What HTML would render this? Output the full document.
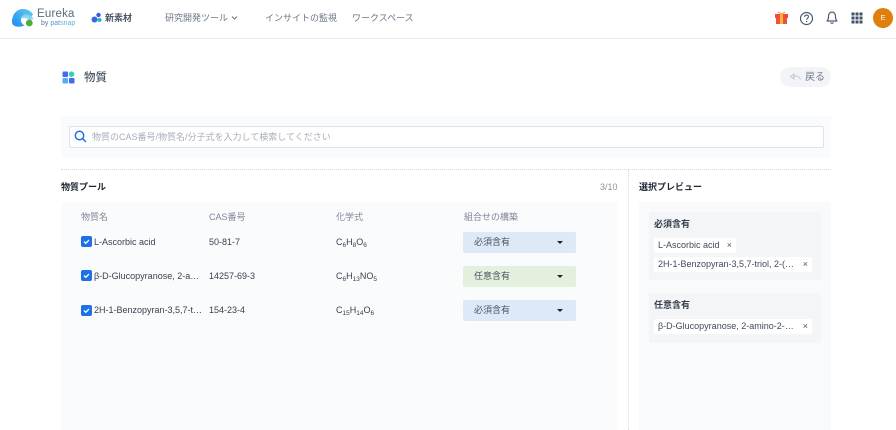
<!DOCTYPE html>
<html lang="ja">
<head>
<meta charset="utf-8">
<style>
html,body{margin:0;padding:0;background:#fff}
body{width:896px;height:430px;overflow:hidden;position:relative;font-family:"Liberation Sans","Noto Sans CJK JP",sans-serif;color:#3f4a5c}
.a{position:absolute;white-space:nowrap;line-height:14px}
svg{position:absolute;display:block}
.nav{font-size:9px;color:#6b7688;top:11px}
.th{font-size:9px;color:#7d8796;top:210px}
.td{font-size:9px;color:#39414f}
.td sub{font-size:6.5px;line-height:0;vertical-align:-2px}
.cb{position:absolute;left:81px;width:11px;height:11px;background:#1f6fe8;border-radius:2px}
.sel{position:absolute;left:463px;width:113px;height:21px;border-radius:2px;font-size:9px;line-height:20px;color:#4a5465;text-indent:11px}
.sel i{position:absolute;left:94px;top:9px;width:0;height:0;border-left:3px solid transparent;border-right:3px solid transparent;border-top:3.5px solid #1d2330}
.tag{position:absolute;background:#fff;border-radius:2px;font-size:9px;line-height:15px;color:#3f4a5c;height:15px;left:654px;text-indent:4px;white-space:nowrap}
.tag b{position:absolute;right:4px;top:0;font-weight:400;font-size:9px;color:#4f5a6b;text-indent:0}
</style>
</head>
<body>
<!-- header -->
<div style="position:absolute;left:0;top:0;width:896px;height:38px;border-bottom:1px solid #e9ebef"></div>
<svg style="left:12px;top:9px" width="22" height="18" viewBox="0 0 22 18">
<defs><linearGradient id="g" x1="0" y1="1" x2="1" y2="0"><stop offset="0" stop-color="#1b8df0"/><stop offset="1" stop-color="#66c8f0"/></linearGradient></defs>
<path d="M0 13C0 5 5 0 11 0c4.500 0 8 2 10 5.500-1 1.500-2 2.500-3 3.500-1.500-2-3.500-3-5.500-2.500-2.500.5-4 2.800-3.500 5.500.4 2 1.800 3.500 3.500 4.500-2 1-5 1.500-8 1C2 17 0 15.500 0 13z" fill="url(#g)"/>
<path d="M8 10c1-3 3.500-5 6.500-5 3 0 5.500 2 7 5-1.500.5-3 1-4 2-1.500-2-3-3-5-3-1.500 0-3 .2-4.500 1z" fill="#7ed0f2" opacity=".85"/>
<circle cx="17.300" cy="14" r="3.400" fill="#4caf3c"/>
</svg>
<div class="a" style="left:37px;top:7px;font-size:11.500px;letter-spacing:.2px;color:#5b6a7e">Eureka</div>
<div class="a" style="left:41px;top:18px;font-size:7px;color:#66758a;line-height:12px">by <span style="color:#4a9ad8">pat</span><span style="color:#5bb4d8">snap</span></div>
<svg style="left:91px;top:12px" width="12" height="12" viewBox="0 0 12 12">
<circle cx="7.500" cy="3" r="2.200" fill="#3b5bdb"/><circle cx="3.500" cy="7.500" r="3" fill="#3568e0"/><circle cx="8.500" cy="8" r="2" fill="#2bb3d6"/>
</svg>
<div class="a" style="left:105px;top:11px;font-size:9px;font-weight:700;color:#4a5567">新素材</div>
<div class="a nav" style="left:165px">研究開発ツール</div>
<svg style="left:231px;top:15px" width="7" height="6" viewBox="0 0 7 6"><path d="M1 1.500l2.500 2.500L6 1.500" fill="none" stroke="#6b7688" stroke-width="1"/></svg>
<div class="a nav" style="left:265px">インサイトの監視</div>
<div class="a nav" style="left:352px">ワークスペース</div>

<svg style="left:774px;top:11px" width="15" height="14" viewBox="0 0 15 14">
<rect x="1" y="3" width="13" height="4" fill="#ef4a3c"/><rect x="2" y="7" width="11" height="6" fill="#f0503f"/><rect x="6" y="3" width="3" height="10" fill="#f6b73c"/>
<path d="M7.500 3L4 1M7.500 3L11 1" stroke="#f6a03c" stroke-width="1.200"/>
</svg>
<svg style="left:799px;top:11px" width="15" height="15" viewBox="0 0 15 15">
<circle cx="7.500" cy="7.500" r="6" fill="none" stroke="#4b5a72" stroke-width="1.200"/>
<path d="M5.600 6c0-1.200 1-1.900 2-1.900s1.900.7 1.900 1.700c0 1.300-1.900 1.400-1.900 2.900" fill="none" stroke="#4b5a72" stroke-width="1.100"/><circle cx="7.600" cy="10.600" r=".7" fill="#4b5a72"/>
</svg>
<svg style="left:825px;top:10px" width="14" height="15" viewBox="0 0 14 15">
<path d="M2 11c1.200-1 1.500-2 1.500-4.500C3.500 3.800 5 2 7 2s3.500 1.800 3.500 4.500C10.500 9 10.800 10 12 11z" fill="none" stroke="#4b5a72" stroke-width="1.200" stroke-linejoin="round"/>
<path d="M5.500 12.500c.5 1 2.500 1 3 0" fill="none" stroke="#4b5a72" stroke-width="1.200"/>
</svg>
<svg style="left:851px;top:12px" width="12" height="12" viewBox="0 0 12 12" fill="#3f4f69">
<rect x="0.500" y="0.500" width="3" height="3"/><rect x="4.500" y="0.500" width="3" height="3"/><rect x="8.500" y="0.500" width="3" height="3"/>
<rect x="0.500" y="4.500" width="3" height="3"/><rect x="4.500" y="4.500" width="3" height="3"/><rect x="8.500" y="4.500" width="3" height="3"/>
<rect x="0.500" y="8.500" width="3" height="3"/><rect x="4.500" y="8.500" width="3" height="3"/><rect x="8.500" y="8.500" width="3" height="3"/>
</svg>
<div style="position:absolute;left:873px;top:8px;width:20px;height:20px;border-radius:50%;background:#e07f0c;color:#fff;font-size:7.500px;line-height:20px;text-align:center">E</div>

<!-- title -->
<svg style="left:62px;top:71px" width="13" height="13" viewBox="0 0 13 13">
<rect x="0.500" y="0.500" width="5.500" height="5.500" rx="1" fill="#3f6ff0"/><circle cx="9.500" cy="3.200" r="2.800" fill="#36cfc0"/>
<rect x="0.500" y="7" width="5.500" height="5.500" rx="1" fill="#5aa8f5"/><rect x="7" y="7" width="5.500" height="5.500" rx="1" fill="#3f6ff0"/>
</svg>
<div class="a" style="left:84px;top:71px;font-size:11.500px;font-weight:500;color:#4a5567">物質</div>
<div style="position:absolute;left:780px;top:67px;width:51px;height:20px;border-radius:10px;background:#f2f4f7"></div>
<svg style="left:789px;top:72px" width="13" height="10" viewBox="0 0 13 10"><path d="M1.500 4.500L5 2v5zM4 4.500c3-1 6-.5 7.500 3" fill="none" stroke="#c3c8d0" stroke-width="1"/></svg>
<div class="a" style="left:805px;top:71px;font-size:10px;color:#747e8e">戻る</div>

<!-- search -->
<div style="position:absolute;left:61px;top:116px;width:770px;height:42px;background:#fafbfc"></div>
<div style="position:absolute;left:69px;top:126px;width:753px;height:20px;background:#fff;border:1px solid #dfe2e8;border-radius:2px"></div>
<svg style="left:74px;top:130px" width="13" height="13" viewBox="0 0 13 13"><circle cx="5.500" cy="5.500" r="4.200" fill="none" stroke="#1f6fe8" stroke-width="1.500"/><path d="M8.700 8.700L11.500 11.500" stroke="#1f6fe8" stroke-width="1.500" stroke-linecap="round"/></svg>
<div class="a" style="left:92px;top:130px;font-size:9px;color:#a6adb8">物質のCAS番号/物質名/分子式を入力して検索してください</div>

<div style="position:absolute;left:61px;top:169px;width:770px;border-top:1px dotted #cdd9e2"></div>

<!-- pool -->
<div class="a" style="left:61px;top:180px;font-size:9px;font-weight:700;color:#1f2733">物質プール</div>
<div class="a" style="left:600px;top:180px;font-size:9px;color:#8b94a2">3/10</div>
<div style="position:absolute;left:61px;top:202px;width:557px;height:228px;background:#fafbfd"></div>
<div class="a th" style="left:81px">物質名</div>
<div class="a th" style="left:209px">CAS番号</div>
<div class="a th" style="left:336px">化学式</div>
<div class="a th" style="left:464px">組合せの構築</div>

<div class="cb" style="top:236px"><svg style="left:2px;top:2px" width="7" height="7" viewBox="0 0 7 7"><path d="M1 3.500l1.800 1.800L6 2" fill="none" stroke="#fff" stroke-width="1.300"/></svg></div>
<div class="a td" style="left:94px;top:235px">L-Ascorbic acid</div>
<div class="a td" style="left:209px;top:235px">50-81-7</div>
<div class="a td" style="left:336px;top:235px">C<sub>6</sub>H<sub>8</sub>O<sub>6</sub></div>
<div class="sel" style="top:232px;background:#dde9f6">必須含有<i></i></div>

<div class="cb" style="top:270px"><svg style="left:2px;top:2px" width="7" height="7" viewBox="0 0 7 7"><path d="M1 3.500l1.800 1.800L6 2" fill="none" stroke="#fff" stroke-width="1.300"/></svg></div>
<div class="a td" style="left:94px;top:269px">β-D-Glucopyranose, 2-a…</div>
<div class="a td" style="left:209px;top:269px">14257-69-3</div>
<div class="a td" style="left:336px;top:269px">C<sub>6</sub>H<sub>13</sub>NO<sub>5</sub></div>
<div class="sel" style="top:266px;background:#e4f0de">任意含有<i></i></div>

<div class="cb" style="top:305px"><svg style="left:2px;top:2px" width="7" height="7" viewBox="0 0 7 7"><path d="M1 3.500l1.800 1.800L6 2" fill="none" stroke="#fff" stroke-width="1.300"/></svg></div>
<div class="a td" style="left:94px;top:303px">2H-1-Benzopyran-3,5,7-t…</div>
<div class="a td" style="left:209px;top:303px">154-23-4</div>
<div class="a td" style="left:336px;top:303px">C<sub>15</sub>H<sub>14</sub>O<sub>6</sub></div>
<div class="sel" style="top:300px;background:#dde9f6">必須含有<i></i></div>

<div style="position:absolute;left:628px;top:170px;height:260px;border-left:1px dotted #c4e0f5"></div>

<!-- preview -->
<div class="a" style="left:639px;top:180px;font-size:9px;font-weight:700;color:#1f2733">選択プレビュー</div>
<div style="position:absolute;left:639px;top:202px;width:192px;height:228px;background:#f9fafb"></div>
<div style="position:absolute;left:649px;top:212px;width:172px;height:68px;background:#f4f5f7;border-radius:2px"></div>
<div class="a" style="left:654px;top:217px;font-size:9px;font-weight:700;color:#333c4a">必須含有</div>
<div class="tag" style="top:238px;width:82px">L-Ascorbic acid<b>×</b></div>
<div class="tag" style="top:257px;width:158px">2H-1-Benzopyran-3,5,7-triol, 2-(…<b>×</b></div>
<div style="position:absolute;left:649px;top:293px;width:172px;height:50px;background:#f4f5f7;border-radius:2px"></div>
<div class="a" style="left:654px;top:298px;font-size:9px;font-weight:700;color:#333c4a">任意含有</div>
<div class="tag" style="top:319px;width:158px">β-D-Glucopyranose, 2-amino-2-…<b>×</b></div>
</body>
</html>
